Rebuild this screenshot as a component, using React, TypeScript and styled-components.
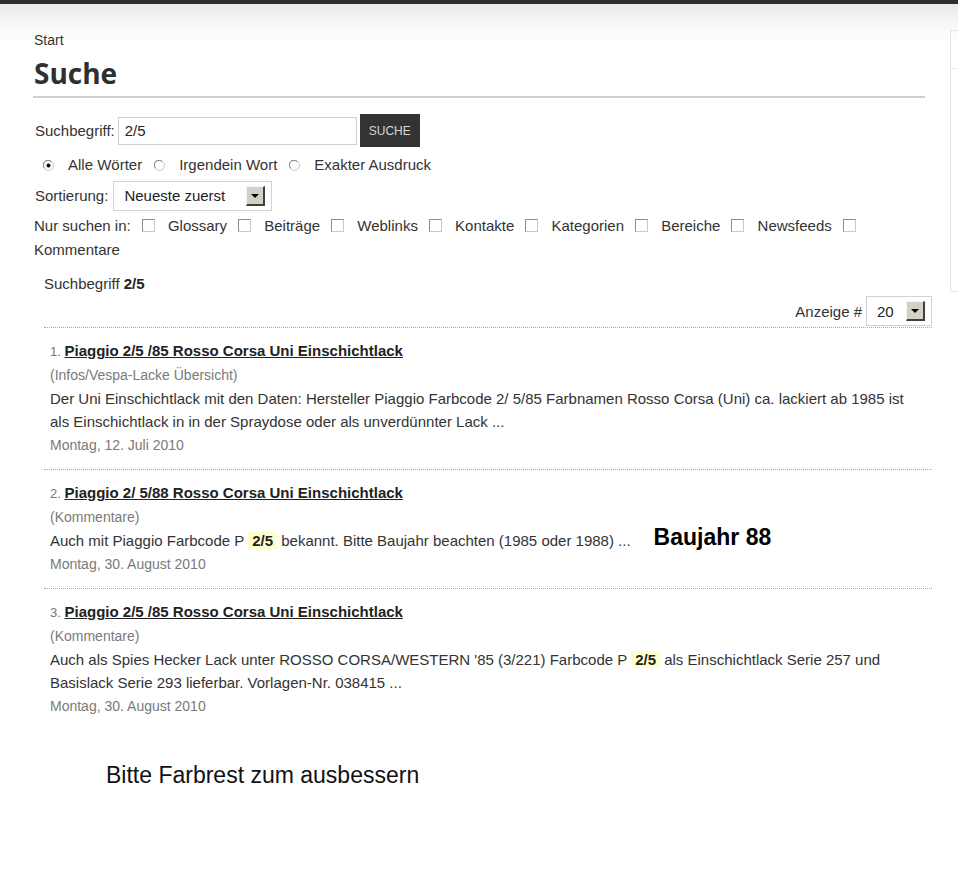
import React from 'react';
import styled, { createGlobalStyle } from 'styled-components';

const GlobalStyle = createGlobalStyle`
  html, body {
    margin: 0;
    padding: 0;
    background: #fff;
  }
  body {
    font-family: "Liberation Sans", Arial, sans-serif;
    font-size: 15px;
    color: #333;
  }
`;

const TopBar = styled.div`
  height: 4px;
  background: #2e2e2e;
`;

const Page = styled.div`
  background: linear-gradient(#e9e9e9 0, #f7f7f7 20px, #fff 40px);
  min-height: 890px;
`;

const Layout = styled.div`
  display: flex;
  align-items: flex-start;
  padding-left: 34px;
`;

const Main = styled.main`
  flex: none;
  width: 898px;
  padding-top: 27px;
`;

const Sidebar = styled.aside`
  flex: none;
  width: 30px;
  height: 260px;
  margin: 26px 0 0 18px;
  border: 1px solid #e4e4e4;
  border-right: none;
`;

const SidebarHead = styled.div`
  height: 37px;
  border-bottom: 1px solid #ececec;
`;

const Breadcrumb = styled.div`
  font-size: 14px;
  line-height: 18px;
  color: #333;
`;

const Title = styled.h1`
  margin: 6px 0 0 -1px;
  font-family: "Open Sans", sans-serif;
  font-weight: 700;
  font-size: 28px;
  line-height: 36px;
  color: #2f2f2f;
  width: 891px;
  padding-left: 1px;
  padding-bottom: 5px;
  border-bottom: 2px solid #cfcfcf;
`;

const Form = styled.form`
  margin-top: 16px;
`;

const Row = styled.div<{ mt?: number }>`
  display: flex;
  align-items: center;
  margin-top: ${p => p.mt ?? 0}px;
  line-height: 24px;
`;

const Label = styled.label<{ gap?: number }>`
  margin-left: 1px;
  margin-right: ${p => p.gap ?? 3}px;
`;

const TextInput = styled.div`
  box-sizing: border-box;
  width: 239px;
  height: 28px;
  border: 1px solid #cfcfcf;
  padding: 0 6px;
  line-height: 26px;
  font-size: 15px;
  color: #222;
`;

const Button = styled.button`
  box-sizing: border-box;
  width: 60px;
  height: 33px;
  margin-left: 3px;
  border: none;
  background: #333;
  color: #d6d6d6;
  font-family: "Liberation Sans", Arial, sans-serif;
  font-size: 12px;
  padding: 0;
`;

const Radio = styled.span<{ first?: boolean }>`
  display: inline-flex;
  width: 11px;
  height: 11px;
  margin-left: ${p => (p.first ? 9 : 12)}px;
  margin-right: 14px;
  svg { display: block; }
`;

const Select = styled.div<{ w: number }>`
  box-sizing: border-box;
  display: flex;
  align-items: center;
  justify-content: space-between;
  width: ${p => p.w}px;
  height: 30px;
  border: 1px solid #d2d2d2;
  padding: 0 6px 0 10px;
  background: #fff;
  color: #222;
`;

const Arrow = styled.span`
  box-sizing: border-box;
  display: flex;
  align-items: center;
  justify-content: center;
  width: 19px;
  height: 20px;
  background: #d4d0c8;
  border-top: 1px solid #f4f4f4;
  border-left: 1px solid #f4f4f4;
  border-right: 2px solid #404040;
  border-bottom: 2px solid #404040;
  &::after {
    content: '';
    border-left: 4px solid transparent;
    border-right: 4px solid transparent;
    border-top: 4px solid #000;
  }
`;

const FilterLine = styled.div`
  margin-top: 3px;
  line-height: 24px;
`;

const Check = styled.span`
  box-sizing: border-box;
  display: inline-block;
  width: 13px;
  height: 13px;
  margin: 0 9px 0 11px;
  vertical-align: -1px;
  background: #fff;
  border: 1px solid #c9c9c9;
  border-top-color: #8c8c8c;
  border-left-color: #8c8c8c;
`;

const Results = styled.div`
  margin-left: 10px;
`;

const Query = styled.div`
  margin-top: 10px;
  line-height: 24px;
  b { font-weight: 700; color: #222; }
`;

const Counter = styled.div`
  display: flex;
  justify-content: flex-end;
  align-items: center;
  gap: 4px;
`;

const List = styled.ol`
  list-style: none;
  margin: 1px 0 0;
  padding: 0;
`;

const Item = styled.li`
  padding: 11px 24px 12px 6px;
  border-top: 1px dotted #a8a8a8;
`;

const ItemTitle = styled.div`
  line-height: 24px;
`;

const Num = styled.span`
  font-size: 13px;
  color: #777;
`;

const TitleLink = styled.a`
  font-size: 15px;
  font-weight: 700;
  color: #222;
  text-decoration: underline;
`;

const Category = styled.div`
  font-size: 14px;
  line-height: 23px;
  color: #7a7a7a;
`;

const Excerpt = styled.div`
  font-size: 15px;
  line-height: 23px;
  color: #333;
`;

const Highlight = styled.span`
  background: #ffffcc;
  font-weight: 700;
  color: #222;
  padding: 0 4px;
`;

const Note = styled.span`
  font-size: 23px;
  line-height: 0;
  font-weight: 700;
  color: #000;
  margin-left: 23px;
  position: relative;
  top: -1px;
`;

const DateLine = styled.div`
  font-size: 14px;
  line-height: 24px;
  color: #7a7a7a;
`;

const Footer = styled.p`
  margin: 32px 0 0 72px;
  font-size: 23px;
  line-height: 26px;
  color: #111;
`;

const RadioIcon = ({ checked }: { checked?: boolean }) => (
  <svg width="11" height="11" viewBox="0 0 11 11">
    <circle cx="5.5" cy="5.5" r="5" fill="#fff" stroke="#c8c8c8" />
    <path d="M1.6 8.2 A4.3 4.3 0 0 1 8.2 1.6" fill="none" stroke="#808080" strokeWidth="1" />
    {checked && <circle cx="5.5" cy="5.5" r="2" fill="#000" />}
  </svg>
);

const areas = ['Glossary', 'Beiträge', 'Weblinks', 'Kontakte', 'Kategorien', 'Bereiche', 'Newsfeeds', 'Kommentare'];

type Result = {
  title: string;
  category: string;
  text: React.ReactNode;
  date: string;
};

const results: Result[] = [
  {
    title: 'Piaggio 2/5 /85 Rosso Corsa Uni Einschichtlack',
    category: '(Infos/Vespa-Lacke Übersicht)',
    text: 'Der Uni Einschichtlack mit den Daten: Hersteller Piaggio Farbcode 2/ 5/85 Farbnamen Rosso Corsa (Uni) ca. lackiert ab 1985 ist als Einschichtlack in in der Spraydose oder als unverdünnter Lack ...',
    date: 'Montag, 12. Juli 2010',
  },
  {
    title: 'Piaggio 2/ 5/88 Rosso Corsa Uni Einschichtlack',
    category: '(Kommentare)',
    text: (
      <>
        Auch mit Piaggio Farbcode P <Highlight>2/5</Highlight> bekannt. Bitte Baujahr beachten (1985 oder 1988) ...
        <Note>Baujahr 88</Note>
      </>
    ),
    date: 'Montag, 30. August 2010',
  },
  {
    title: 'Piaggio 2/5 /85 Rosso Corsa Uni Einschichtlack',
    category: '(Kommentare)',
    text: (
      <>
        Auch als Spies Hecker Lack unter ROSSO CORSA/WESTERN '85 (3/221) Farbcode P <Highlight>2/5</Highlight> als
        Einschichtlack Serie 257 und Basislack Serie 293 lieferbar. Vorlagen-Nr. 038415 ...
      </>
    ),
    date: 'Montag, 30. August 2010',
  },
];

const App: React.FC = () => {
  return (
    <>
      <GlobalStyle />
      <TopBar />
      <Page>
        <Layout>
          <Main>
            <Breadcrumb>Start</Breadcrumb>
            <Title>Suche</Title>

            <Form onSubmit={e => e.preventDefault()}>
              <Row>
                <Label>Suchbegriff:</Label>
                <TextInput>2/5</TextInput>
                <Button type="submit">SUCHE</Button>
              </Row>

              <Row mt={6}>
                <Radio first><RadioIcon checked /></Radio>
                Alle Wörter
                <Radio><RadioIcon /></Radio>
                Irgendein Wort
                <Radio><RadioIcon /></Radio>
                Exakter Ausdruck
              </Row>

              <Row mt={4}>
                <Label gap={5}>Sortierung:</Label>
                <Select w={159}>
                  Neueste zuerst
                  <Arrow />
                </Select>
              </Row>

              <FilterLine>
                Nur suchen in:
                {areas.map(a => (
                  <React.Fragment key={a}>
                    <Check />{' '}{a}
                  </React.Fragment>
                ))}
              </FilterLine>
            </Form>

            <Results>
              <Query>
                Suchbegriff <b>2/5</b>
              </Query>

              <Counter>
                Anzeige #
                <Select w={66}>
                  20
                  <Arrow />
                </Select>
              </Counter>

              <List>
                {results.map((r, i) => (
                  <Item key={i}>
                    <ItemTitle>
                      <Num>{i + 1}. </Num>
                      <TitleLink>{r.title}</TitleLink>
                    </ItemTitle>
                    <Category>{r.category}</Category>
                    <Excerpt>{r.text}</Excerpt>
                    <DateLine>{r.date}</DateLine>
                  </Item>
                ))}
              </List>
            </Results>

            <Footer>Bitte Farbrest zum ausbessern</Footer>
          </Main>
          <Sidebar>
            <SidebarHead />
          </Sidebar>
        </Layout>
      </Page>
    </>
  );
};

export default App;
